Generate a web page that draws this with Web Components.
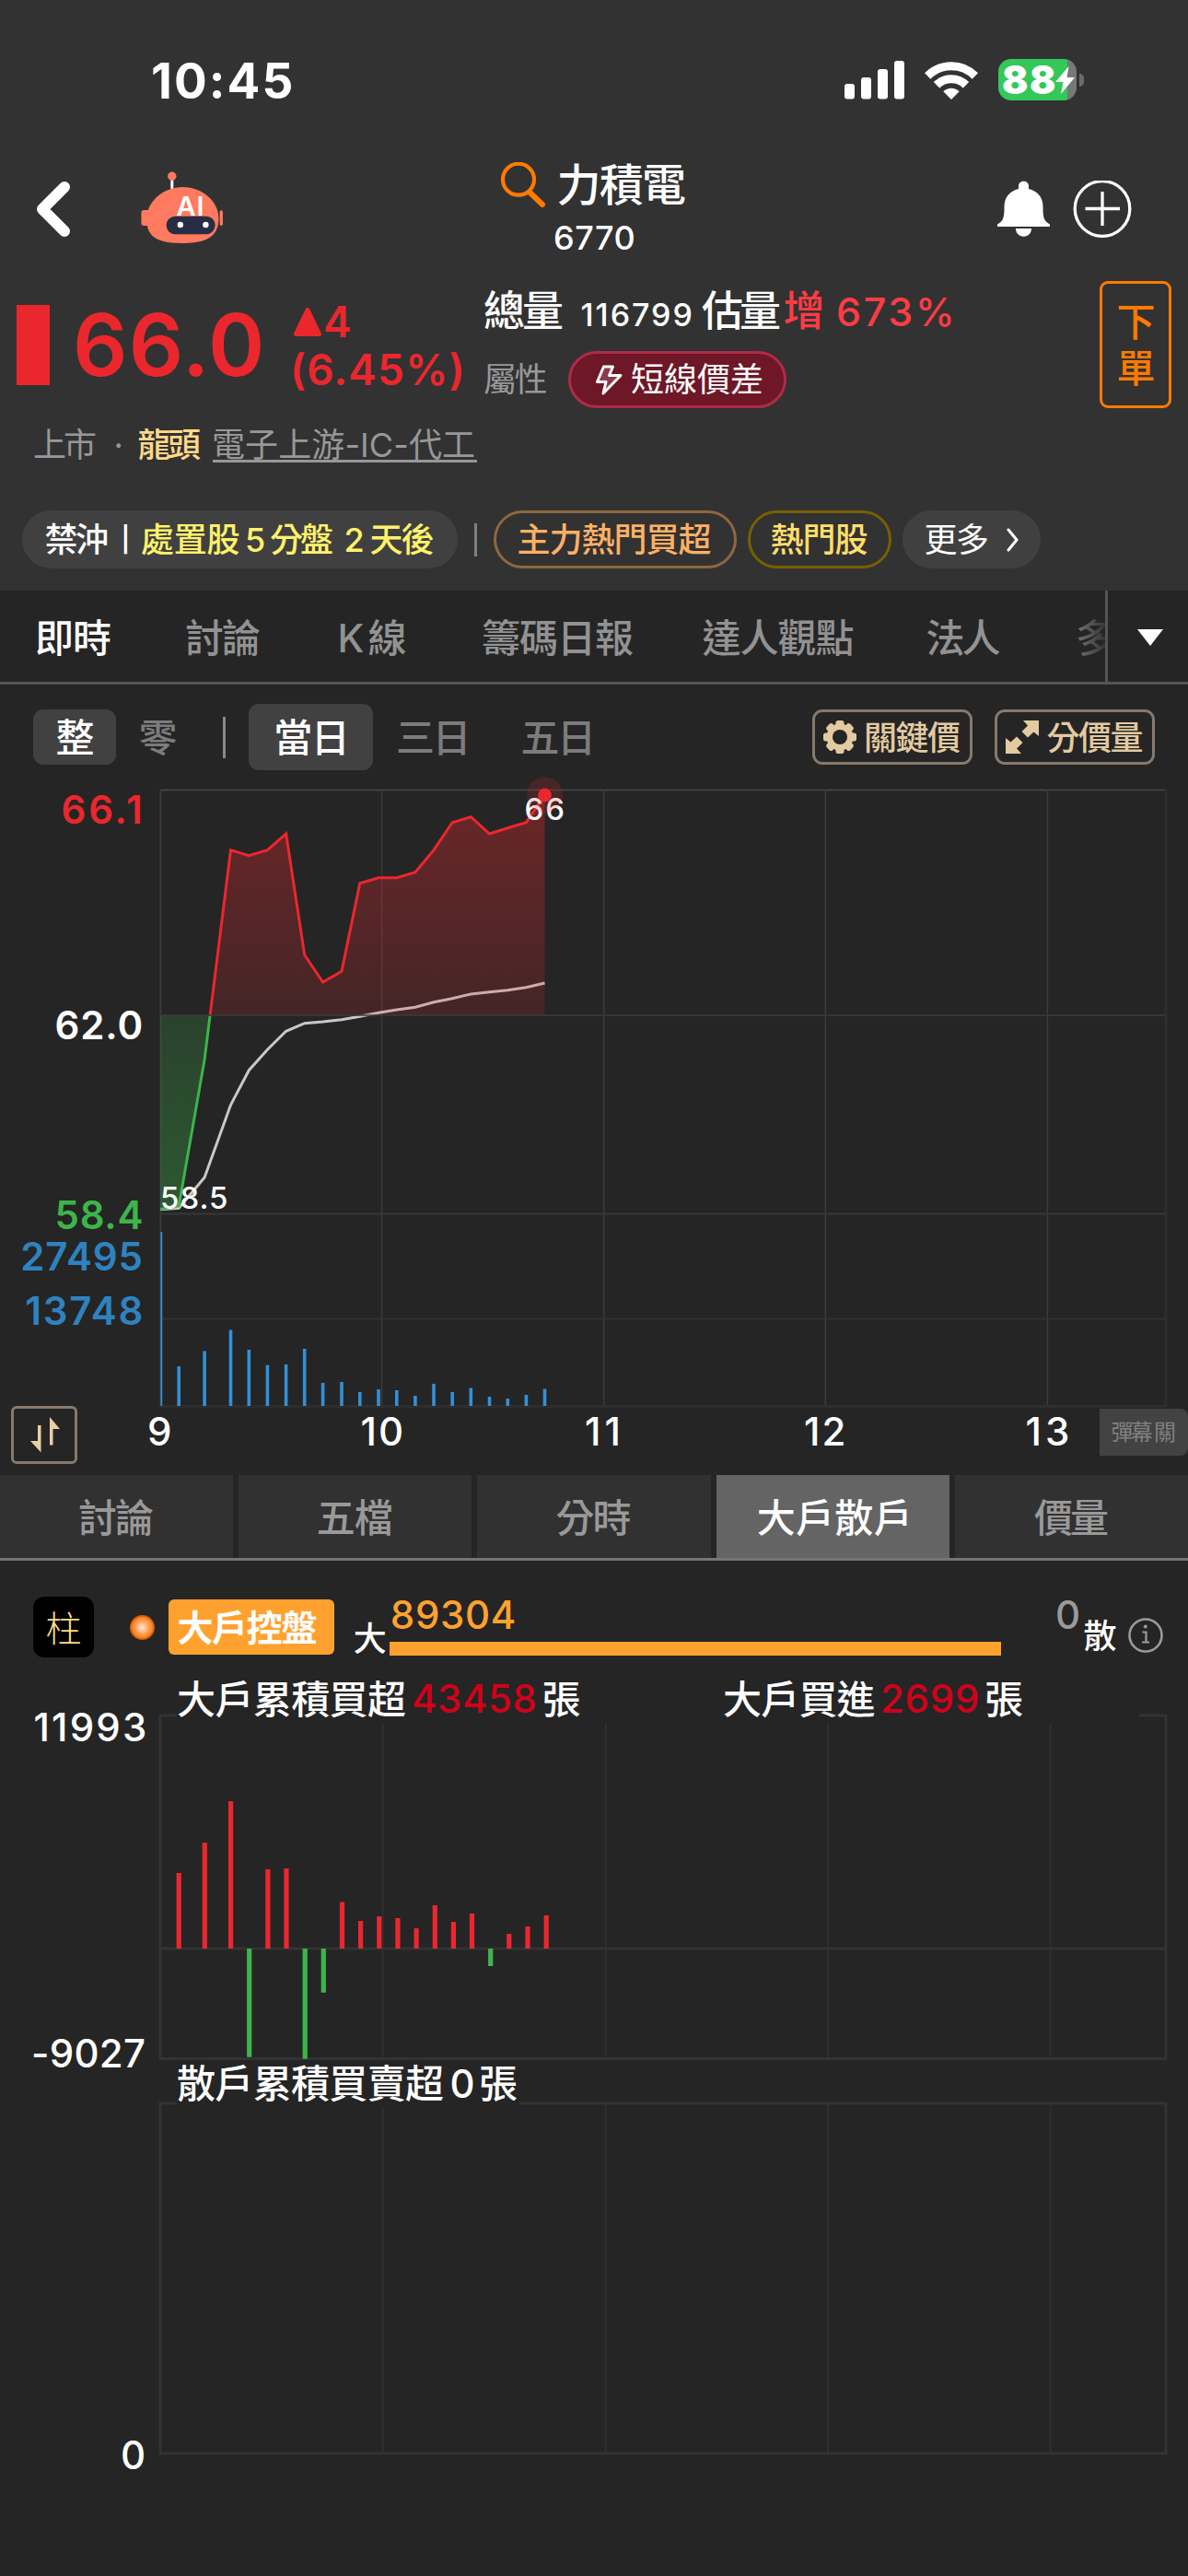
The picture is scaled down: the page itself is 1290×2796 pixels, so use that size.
<!DOCTYPE html>
<html lang="zh-Hant">
<head>
<meta charset="utf-8">
<title>力積電 6770</title>
<style>
    html, body {
        margin: 0;
        background: #252525;
    }
    body {
        width: 1290px;
        height: 2796px;
        overflow: hidden;
        font-family: Inter, "Noto Sans CJK TC", sans-serif;
        font-weight: 500;
        font-optical-sizing: none;
        font-variation-settings: "opsz" 14;
        color: #fff;
    }
</style>
</head>
<body>
<stock-app></stock-app>

<script>
const UP = '#eb272e';
const DOWN = '#3cb54a';
const FONT_FAMILY = 'Inter, "Noto Sans CJK TC", sans-serif';

const measureContext = document.createElement('canvas').getContext('2d');

function advanceOf(text, font) {
    const probe = document.createElement('span');
    probe.style.cssText = 'position:absolute;visibility:hidden;white-space:pre';
    probe.style.font = font;
    probe.style.fontOpticalSizing = 'none';
    probe.style.fontVariationSettings = '"opsz" 14';
    probe.textContent = text;
    document.body.append(probe);
    const width = probe.getBoundingClientRect().width;
    probe.remove();
    return width;
}

// Letter spacing and indent that make the ink of a text exactly `width` wide.
function fitInk(text, font, width) {
    measureContext.font = font;
    const box = measureContext.measureText(text);
    const bearings = box.width - box.actualBoundingBoxLeft - box.actualBoundingBoxRight;
    const ink = advanceOf(text, font) - bearings;
    const count = [...text].length;
    return {
        indent: box.actualBoundingBoxLeft,
        spacing: count > 1 ? (width - ink) / (count - 1) : 0
    };
}

class BaseElement extends HTMLElement {
    constructor() {
        super();
        this.attachShadow({mode: 'open'});
    }

    connectedCallback() {
        this.shadowRoot.innerHTML = `<style>* { box-sizing: border-box; } ${this.getStyle()}</style>${this.getTemplate()}`;
    }

    getStyle() {
        return '';
    }

    getTemplate() {
        return '<slot></slot>';
    }
}

class FitText extends BaseElement {
    connectedCallback() {
        super.connectedCallback();
        const width = parseFloat(this.getAttribute('width'));
        const style = getComputedStyle(this);
        const font = `${style.fontWeight} ${style.fontSize} ${style.fontFamily}`;
        const fit = fitInk(this.textContent, font, width);
        const nudge = /\p{Script=Han}/u.test(this.textContent) ? .5 : 0;
        this.style.width = `${width}px`;
        this.style.textIndent = `${fit.indent - nudge}px`;
        this.style.letterSpacing = `${fit.spacing}px`;
    }

    getStyle() {
        return `
            :host {
                display: inline-block;
                flex: none;
                text-align: left;
                white-space: pre;
            }
        `;
    }
}

class StatusBar extends BaseElement {
    getStyle() {
        return `
            :host {
                display: flex;
                align-items: flex-start;
                height: 150px;
                padding: 63px 113px 0 166px;
                justify-content: space-between;
            }
            .time {
                font-size: 53px;
                font-weight: 750;
                line-height: 51px;
            }
            .icons {
                display: flex;
                align-items: center;
                height: 47px;
            }
            .battery {
                display: flex;
                align-items: center;
                margin-left: 22px;
            }
            .cell {
                display: flex;
                align-items: center;
                width: 85px;
                height: 45px;
                padding-left: 5px;
                border-radius: 14px;
                background: linear-gradient(90deg, #34c759 75px, #787878 75px);
                font-size: 42px;
                font-weight: 900;
                line-height: 45px;
            }
            .cap {
                width: 5px;
                height: 14px;
                margin-left: 3px;
                border-radius: 0 5px 5px 0;
                background: #6c6c6c;
            }
        `;
    }

    getTemplate() {
        return `
            <fit-text class="time" width="150.500">10:45</fit-text>
            <div class="icons">
                <svg width="65" height="42" viewBox="0 0 65 42" fill="#fff">
                    <rect x="0" y="25" width="11" height="16.5" rx="3"/>
                    <rect x="18" y="18" width="11" height="23.5" rx="3"/>
                    <rect x="36" y="9" width="11" height="32.5" rx="3"/>
                    <rect x="54" y="0" width="11" height="41.5" rx="3"/>
                </svg>
                <svg width="58" height="42" viewBox="0 0 58 42" fill="none" stroke="#fff" stroke-width="9" style="margin-left:22.5px">
                    <path d="M3.2 16.5A36.5 36.5 0 0 1 54.8 16.5"/>
                    <path d="M13 26.300A22.600 22.600 0 0 1 45 26.300"/>
                    <path d="M29 42L20.300 33.200A12.400 12.400 0 0 1 37.700 33.200Z" fill="#fff" stroke="none"/>
                </svg>
                <div class="battery">
                    <div class="cell">
                        <fit-text width="57">88</fit-text>
                        <svg width="21" height="30" viewBox="0 0 21 30" fill="#fff"><path d="M14.500 0L0 17H8.500L6 30L21 12H12.500Z"/></svg>
                    </div>
                    <div class="cap"></div>
                </div>
            </div>
        `;
    }
}

class NavBar extends BaseElement {
    getStyle() {
        return `
            :host {
                display: grid;
                grid-template-columns: 400px 1fr 400px;
                height: 140px;
            }
            .left, .right {
                display: flex;
                align-items: flex-start;
            }
            .left {
                padding: 36px 0 0 40px;
            }
            .right {
                justify-content: flex-end;
                padding: 46px 60px 0 0;
            }
            .name {
                display: flex;
                margin-left: 143px;
                padding-top: 26px;
                font-size: 48px;
                line-height: 50px;
            }
            .code {
                display: block;
                margin: 14px 0 0 202px;
                font-size: 36px;
                line-height: 36px;
            }
            .robot text {
                font: 600 29px Inter, sans-serif;
            }
        `;
    }

    getTemplate() {
        return `
            <div class="left">
                <svg width="36" height="60" viewBox="0 0 36 60" fill="none" stroke="#fff" stroke-width="12" stroke-linecap="round" stroke-linejoin="round" style="margin-top:11px">
                    <path d="M30 6L6 30L30 54"/>
                </svg>
                <svg class="robot" width="90" height="79" viewBox="0 0 90 79" style="margin-left:77px">
                    <path d="M33.800 9V19" stroke="#fff" stroke-width="3"/>
                    <circle cx="33.800" cy="5.300" r="4.700" fill="#ff7a5e"/>
                    <rect x="0.400" y="42" width="12" height="17" rx="3" fill="#ff7a5e"/>
                    <rect x="85.600" y="42.300" width="3.300" height="16.500" rx="1.600" fill="#ff7a5e"/>
                    <path d="M45.500 17C66 17 84.400 32 84.400 51C84.400 68 75 78 45.500 78C16 78 6.200 70 6.200 52C6.200 32 25 17 45.500 17Z" fill="#ff7a5e"/>
                    <rect x="27.600" y="48.700" width="53" height="19.600" rx="9.800" fill="#262d45"/>
                    <circle cx="42.800" cy="58" r="3.200" fill="#fff"/>
                    <circle cx="70.400" cy="58" r="3.200" fill="#fff"/>
                    <text x="38.500" y="47.500" letter-spacing="1" fill="#fff">AI</text>
                </svg>
            </div>
            <div>
                <div class="name">
                    <svg width="50" height="50" viewBox="0 0 50 50" fill="none" stroke="#ff7a00">
                        <circle cx="20" cy="18.700" r="17" stroke-width="4.200"/>
                        <path d="M32.500 33L46 46" stroke-width="6" stroke-linecap="round"/>
                    </svg>
                    <fit-text width="137.5" style="margin-left:14px">力積電</fit-text>
                </div>
                <fit-text class="code" width="86.5">6770</fit-text>
            </div>
            <div class="right">
                <svg width="58" height="62" viewBox="0 0 58 62" fill="#fff">
                    <path d="M23 9V6C23 -1 34 -1 34 6V9C43 11 49.500 18 49.500 28C49.500 39 50 44 57 47.500V50H0V47.500C7 44 7.500 39 7.500 28C7.500 18 14 11 23 9Z"/>
                    <path d="M20 52H37C37 63.500 20 63.500 20 52Z"/>
                </svg>
                <svg width="65" height="64" viewBox="0 0 65 64" fill="none" stroke="#fff" stroke-width="3.300" style="margin-left:24px">
                    <circle cx="32" cy="30.500" r="29.800"/>
                    <path d="M13.500 30.500H51M32 12V49"/>
                </svg>
            </div>
        `;
    }
}

class QuoteHead extends BaseElement {
    getStyle() {
        return `
            :host {
                display: block;
                height: 264px;
            }
            .quote {
                display: flex;
                align-items: flex-start;
                height: 167px;
                color: ${UP};
                font-weight: 600;
            }
            .bar {
                width: 36px;
                height: 87px;
                margin: 41px 0 0 18px;
                background: ${UP};
            }
            .price {
                margin: 39px 0 0 29px;
                font-size: 93px;
                line-height: 90px;
            }
            .change {
                display: flex;
                flex-direction: column;
                gap: 2px;
                width: 182px;
                margin-left: 36px;
                padding-top: 34px;
                font-size: 46px;
                line-height: 50px;
            }
            .change div {
                display: flex;
                align-items: center;
            }
            .info {
                margin-left: 25.500px;
                padding-top: 23px;
                color: #fff;
                font-weight: 500;
            }
            .volume {
                display: flex;
                align-items: baseline;
                height: 50px;
                font-size: 45px;
                line-height: 50px;
            }
            .kind {
                display: flex;
                align-items: center;
                margin-top: 18px;
                font-size: 36px;
                font-weight: 400;
                line-height: 50px;
                color: #989898;
            }
            .pill {
                display: flex;
                align-items: center;
                width: 237px;
                height: 62px;
                margin-left: 22.500px;
                padding-left: 26px;
                border: 3px solid #b02a4a;
                border-radius: 31px;
                background: #6e1726;
                color: #fff;
            }
            .order {
                width: 78px;
                height: 138px;
                margin: 15px 18px 0 auto;
                padding: 17px 15.500px;
                border: 3px solid #ff7a00;
                border-radius: 9px;
                color: #ff7a00;
                font-size: 42px;
                font-weight: 500;
                line-height: 50px;
            }
            .sector {
                display: flex;
                padding: 1px 0 0 37.500px;
                color: #989898;
                font-size: 36px;
                font-weight: 400;
                line-height: 50px;
            }
            .sector b {
                font-weight: 500;
                color: #ffd98a;
            }
            .link {
                height: 44px;
                border-bottom: 3px solid #989898;
            }
        `;
    }

    getTemplate() {
        return `
            <div class="quote">
                <div class="bar"></div>
                <fit-text class="price" width="200">66.0</fit-text>
                <div class="change">
                    <div>
                        <svg width="30" height="31" viewBox="0 0 30 31"><path d="M15 2.500L27.500 28.500H2.500Z" fill="${UP}" stroke="${UP}" stroke-width="5" stroke-linejoin="round"/></svg>
                        <fit-text width="29" style="margin-left:4px">4</fit-text>
                    </div>
                    <fit-text width="181.500">(6.45%)</fit-text>
                </div>
                <div class="info">
                    <div class="volume">
                        <fit-text width="85">總量</fit-text>
                        <fit-text width="119" style="margin-left:20px;font-size:34px">116799</fit-text>
                        <fit-text width="85" style="margin-left:12px">估量</fit-text>
                        <fit-text width="40" style="margin-left:4.500px;color:#ff3b43">增</fit-text>
                        <fit-text width="123" style="margin-left:18px;font-size:43px;color:#ff3b43">673%</fit-text>
                    </div>
                    <div class="kind">
                        <fit-text width="67.5">屬性</fit-text>
                        <div class="pill">
                            <svg width="30" height="33" viewBox="0 0 30 33" fill="#8c3a4b" stroke="#fff" stroke-width="3" stroke-linejoin="round"><path d="M9.500 2H19.500L15.500 11.500H28L9 31L12 18.500H2.500Z"/></svg>
                            <fit-text width="141" style="margin-left:11px">短線價差</fit-text>
                        </div>
                    </div>
                </div>
                <div class="order">下<br>單</div>
            </div>
            <div class="sector">
                <fit-text width="67">上市</fit-text>
                <fit-text width="6" style="margin-left:21px">·</fit-text>
                <b style="margin-left:19.500px"><fit-text width="67.500">龍頭</fit-text></b>
                <div class="link" style="margin-left:12.500px;width:287px"><fit-text width="283" style="margin-left:1.500px">電子上游-IC-代工</fit-text></div>
            </div>
        `;
    }
}

class TagPill extends BaseElement {
    getStyle() {
        return `
            :host {
                display: flex;
                align-items: center;
                flex: none;
                height: 63px;
                border-radius: 32px;
                white-space: nowrap;
            }
            :host([filled]) {
                background: #404040;
            }
            :host([outlined]) {
                justify-content: center;
                border: 3px solid var(--tag-border);
            }
        `;
    }
}

class TagRow extends BaseElement {
    getStyle() {
        return `
            :host {
                display: flex;
                align-items: center;
                height: 63px;
                padding-left: 24px;
                font-size: 36px;
                line-height: 50px;
            }
            hr {
                width: 3px;
                height: 36px;
                margin: 0 18px;
                border: none;
                background: #808080;
            }
            .bar {
                margin-left: 18px;
                font-size: 27px;
                font-weight: 600;
            }
            .stop {
                display: flex;
                gap: 8px;
                margin-left: 17px;
                color: #fff26b;
            }
            .major { --tag-border: #8f6740; color: #ffb066; width: 264px; }
            .hot { --tag-border: #776000; color: #ffdf6b; width: 156px; margin-left: 12px; }
            .more { font-weight: 400; width: 150px; margin-left: 12px; padding-left: 25px; }
        `;
    }

    getTemplate() {
        return `
            <tag-pill filled style="width:473px;padding-left:26px">
                <fit-text width="66.500">禁沖</fit-text>
                <fit-text class="bar" width="3">|</fit-text>
                <span class="stop"><fit-text width="105.500">處置股</fit-text><fit-text width="18.500">5</fit-text><fit-text width="67">分盤</fit-text><fit-text width="19.500" style="margin-left:6px">2</fit-text><fit-text width="68">天後</fit-text></span>
            </tag-pill>
            <hr>
            <tag-pill outlined class="major"><fit-text width="210">主力熱門買超</fit-text></tag-pill>
            <tag-pill outlined class="hot"><fit-text width="104">熱門股</fit-text></tag-pill>
            <tag-pill filled class="more">
                <fit-text width="67.500">更多</fit-text>
                <svg width="14" height="26" viewBox="0 0 14 26" fill="none" stroke="#fff" stroke-width="3" stroke-linecap="round" stroke-linejoin="round" style="margin-left:20px"><path d="M2 2L11 13L2 24"/></svg>
            </tag-pill>
        `;
    }
}

class TabStrip extends BaseElement {
    getStyle() {
        return `
            :host {
                display: flex;
                height: 102px;
                border-bottom: 3px solid #555;
                color: #929292;
                font-size: 42px;
                line-height: 104px;
            }
            .scroll {
                display: flex;
                width: 1200px;
                overflow: hidden;
            }
            .scroll div {
                flex: none;
                text-align: center;
            }
            .active {
                color: #fff;
            }
            .scroll .faded {
                background: linear-gradient(90deg, #929292 25px, #252525 82px);
                -webkit-background-clip: text;
                background-clip: text;
                color: transparent;
            }
            .toggle {
                flex: 1;
                border-left: 3px solid #555;
                padding: 42px 0 0 32px;
                line-height: 0;
            }
        `;
    }

    getTemplate() {
        const tabs = [['即時', 161, 80], ['討論', 163, 80], ['K線', 163, 71], ['籌碼日報', 238, 163], ['達人觀點', 241, 163], ['法人', 161, 79]];
        return `
            <div class="scroll">
                ${tabs.map(([label, width, ink], i) => `<div class="${i === 0 ? 'active' : ''}" style="width:${width}px"><fit-text width="${ink}">${label}</fit-text></div>`).join('')}
                <div class="faded" style="width:124px">多</div>
            </div>
            <div class="toggle"><svg width="28" height="18" viewBox="0 0 28 18"><path d="M0 0H28L14 18Z" fill="#fff"/></svg></div>
        `;
    }
}

class ChartToolbar extends BaseElement {
    getStyle() {
        return `
            :host {
                display: flex;
                align-items: center;
                height: 114px;
                padding: 0 36px;
                font-size: 42px;
                line-height: 50px;
                color: #7c7c7c;
            }
            fit-text {
                padding-top: 1px;
            }
            .on {
                display: flex;
                align-items: center;
                justify-content: center;
                border-radius: 11px;
                background: #414141;
                color: #fff;
            }
            .tool {
                display: flex;
                align-items: center;
                width: 174px;
                height: 60px;
                padding-left: 9px;
                border: 3px solid #857a6c;
                border-radius: 11px;
                color: #e3caa1;
                font-size: 36px;
            }
            hr {
                width: 3px;
                height: 45px;
                margin: 0 25px 0 53px;
                border: none;
                background: #888;
            }
        `;
    }

    getTemplate() {
        return `
            <div class="on" style="width:90px;height:60px"><fit-text width="38">整</fit-text></div>
            <fit-text width="37" style="margin-left:26px">零</fit-text>
            <hr>
            <div class="on" style="width:135px;height:72px"><fit-text width="73.500">當日</fit-text></div>
            <fit-text width="73.500" style="margin-left:27.500px">三日</fit-text>
            <fit-text width="73.500" style="margin-left:62px">五日</fit-text>
            <div class="tool" style="margin-left:auto">
                <svg width="36" height="36" viewBox="-18 -18 36 36" fill="#e3caa1">
                    ${[0, 45, 90, 135].map(a => `<rect x="-4.500" y="-18" width="9" height="36" rx="2.500" transform="rotate(${a})"/>`).join('')}
                    <circle r="14.500"/>
                    <circle r="8" fill="#252525"/>
                </svg>
                <fit-text width="103" style="margin-left:10.500px">關鍵價</fit-text>
            </div>
            <div class="tool" style="margin-left:24px">
                <svg width="36" height="36" viewBox="0 0 36 36" fill="#e3caa1">
                    <path d="M19 0H36V17L30.500 12.500L24 18.500L17.500 12L24 5.500Z"/>
                    <path d="M17 36H0V19L5.500 23.500L12 17.500L18.500 24L12 30.500Z"/>
                </svg>
                <fit-text width="103" style="margin-left:10px">分價量</fit-text>
            </div>
        `;
    }
}

class ChartElement extends BaseElement {
    label(text, x, right, y, color = '#fff', size = 42, weight = 500) {
        const fit = fitInk(text, `${weight} ${size}px ${FONT_FAMILY}`, right - x);
        return `<text x="${x + fit.indent}" y="${y}" fill="${color}" font-size="${size}" font-weight="${weight}" letter-spacing="${fit.spacing}">${text}</text>`;
    }

    line(x1, y1, x2, y2, color, width = 1.5) {
        return `<path d="M${x1} ${y1}L${x2} ${y2}" stroke="${color}" stroke-width="${width}"/>`;
    }
}

class IntradayChart extends ChartElement {
    _x = [174.4, 194.2, 222.1, 250.5, 270.3, 290.4, 310.6, 330.7, 350.6, 371, 390.8, 411, 430.8, 450.9, 471, 491.2, 511.3, 531.5, 551.3, 571.4, 591.5];
    _price = [1312.5, 1309, 1150, 922.7, 928.7, 922.7, 905, 1036.5, 1066, 1054.3, 958.7, 952.7, 952.7, 946.7, 922.7, 892.7, 886.7, 905, 898.8, 892.7, 862.7];
    _average = [1312.7, 1311.3, 1278, 1199.3, 1161.7, 1139.3, 1119.3, 1110.7, 1109, 1106.7, 1103.3, 1099.3, 1096, 1093.3, 1087.7, 1083.7, 1079, 1076.7, 1074.7, 1071.7, 1067];
    _volume = [1337, 1483, 1466.5, 1443.5, 1465, 1481.7, 1481, 1464, 1501, 1500, 1511, 1508, 1509, 1515, 1502, 1511, 1506.5, 1516, 1518, 1514, 1507.5];

    getStyle() {
        return `
            :host {
                display: block;
                position: relative;
                height: 744px;
            }
            svg {
                display: block;
            }
            .sort, .danmu {
                position: absolute;
            }
            .sort {
                left: 12px;
                top: 669px;
                width: 72px;
                height: 63px;
                border: 3px solid #857a6c;
                border-radius: 6px;
            }
            .danmu {
                right: 0;
                top: 672px;
                width: 96px;
                height: 51px;
                padding-left: 14px;
                border-radius: 0 8px 8px 0;
                background: #424242;
                color: #808080;
                font-size: 24px;
                font-weight: 400;
                line-height: 51px;
            }
        `;
    }

    getTemplate() {
        const points = ys => this._x.map((x, i) => `${x} ${ys[i]}`).join('L');
        const bars = this._x.slice(1).map((x, i) => `<rect x="${x - 1.8}" y="${this._volume[i + 1]}" width="3.600" height="${1526 - this._volume[i + 1]}"/>`).join('');
        const area = `M174.400 1102L${points(this._price)}L591.500 1102Z`;
        return `
            <svg width="1290" height="744" viewBox="0 857 1290 744" overflow="visible">
                <defs>
                    <linearGradient id="up" gradientUnits="userSpaceOnUse" x1="0" y1="857" x2="0" y2="1102">
                        <stop offset="0" stop-color="${UP}" stop-opacity=".36"/>
                        <stop offset="1" stop-color="${UP}" stop-opacity=".16"/>
                    </linearGradient>
                    <linearGradient id="down" gradientUnits="userSpaceOnUse" x1="0" y1="1102" x2="0" y2="1317">
                        <stop offset="0" stop-color="${DOWN}" stop-opacity=".2"/>
                        <stop offset="1" stop-color="${DOWN}" stop-opacity=".36"/>
                    </linearGradient>
                    <clipPath id="above"><rect x="170" y="840" width="430" height="262"/></clipPath>
                    <clipPath id="below"><rect x="174" y="1102" width="430" height="216"/></clipPath>
                </defs>
                ${this.line(174, 857.5, 1265.5, 857.5, '#484848')}
                ${[414.6, 655.7, 896.3, 1137.4].map(x => this.line(x, 857, x, 1526, '#3b3b3b')).join('')}
                ${this.line(174.4, 857, 174.4, 1526, '#3b3b3b', 2)}
                ${this.line(1266, 857, 1266, 1527, '#2e2e2e', 3)}
                ${this.line(174, 1317.5, 1265.5, 1317.5, '#373737', 2)}
                ${this.line(174, 1431.5, 1265.5, 1431.5, '#343434')}
                ${this.line(174, 1526.5, 1267, 1526.5, '#2e2e2e', 3)}
                <path d="M${points(this._average)}" fill="none" stroke="#c8c8c8" stroke-width="3"/>
                <path d="${area}" fill="url(#up)" clip-path="url(#above)"/>
                <path d="${area}" fill="url(#down)" clip-path="url(#below)"/>
                <path d="M${points(this._price)}" fill="none" stroke="${UP}" stroke-width="3" clip-path="url(#above)"/>
                <path d="M${points(this._price)}" fill="none" stroke="${DOWN}" stroke-width="3" clip-path="url(#below)"/>
                ${this.line(174, 1102, 1265.5, 1102, '#3b3b3b')}
                <g fill="#3390d6"><rect x="174.400" y="1337" width="1.800" height="189"/>${bars}</g>
                ${this.label('66', 570.500, 611.200, 889.500, '#fff', 33)}
                <circle cx="591.500" cy="863" r="19.500" fill="${UP}" opacity=".18"/>
                <circle cx="591.500" cy="863" r="7.400" fill="${UP}"/>
                ${this.label('58.5', 176, 246, 1311.500, '#fff', 33)}
                ${this.label('66.1', 68.500, 152, 893.500, UP, 42, 600)}
                ${this.label('62.0', 61.500, 153.500, 1127.500, '#fff', 42, 600)}
                ${this.label('58.4', 61.500, 153.500, 1333.500, DOWN, 42, 600)}
                ${this.label('27495', 24.200, 153.500, 1378.500, '#2e83bf', 42, 600)}
                ${this.label('13748', 28.300, 153.500, 1437.500, '#2e83bf', 42, 600)}
                ${this.label('9', 162, 186, 1568.500)}
                ${this.label('10', 392.500, 436, 1568.500)}
                ${this.label('11', 636, 671.500, 1568.500)}
                ${this.label('12', 874, 916.500, 1568.500)}
                ${this.label('13', 1114.500, 1159, 1568.500)}
            </svg>
            <div class="sort">
                <svg width="66" height="57" viewBox="0 0 66 57" fill="#e8cfa5"><path d="M26 18H29.500V47.500L18 35H26ZM39 39.500V9L50 22H42.500V39.500Z"/></svg>
            </div>
            <div class="danmu"><fit-text width="68.500">彈幕 關</fit-text></div>
        `;
    }
}

class PanelTabs extends BaseElement {
    getStyle() {
        return `
            :host {
                display: grid;
                grid-template-columns: repeat(5, 1fr);
                gap: 6px;
                height: 93px;
                border-bottom: 3px solid #757575;
                font-size: 42px;
                line-height: 94px;
                text-align: center;
                color: #999;
            }
            div {
                height: 90px;
                overflow: hidden;
                background: #313131;
            }
            .active {
                background: #646464;
                color: #fff;
            }
        `;
    }

    getTemplate() {
        const tabs = [['討論', 80], ['五檔', 79], ['分時', 80], ['大戶散戶', 162], ['價量', 80]];
        return tabs.map(([label, ink]) => `<div class="${label === '大戶散戶' ? 'active' : ''}"><fit-text width="${ink}">${label}</fit-text></div>`).join('');
    }
}

class FlowSummary extends BaseElement {
    getStyle() {
        return `
            :host {
                display: flex;
                align-items: flex-start;
                height: 131px;
                padding: 39px 27px 0 36px;
                font-size: 36px;
                line-height: 40px;
            }
            .mode {
                width: 66px;
                height: 66px;
                border-radius: 12px;
                background: #000;
                color: #ffdf8f;
                font-size: 39px;
                font-weight: 300;
                line-height: 69px;
                text-align: center;
            }
            .lamp {
                width: 27px;
                height: 27px;
                margin: 20px 0 0 39px;
                border-radius: 50%;
                background: radial-gradient(circle, #ffe6d0 0, #ffb27a 28%, #ff7f1f 58%, #d85f0a 64%, #b34700 100%);
            }
            .badge {
                width: 180px;
                height: 60px;
                margin: 3px 0 0 15px;
                padding-left: 11px;
                border-radius: 6px;
                background: #ffa12f;
                font-size: 39px;
                font-weight: 700;
                line-height: 62px;
            }
            .meter {
                width: 664px;
                margin: 0 0 0 6px;
                color: #ffa12f;
                font-size: 42px;
            }
            .meter div {
                height: 15px;
                margin-top: 9px;
                background: #ffa12f;
            }
            .rest {
                color: #9a9a9a;
                font-size: 42px;
            }
        `;
    }

    getTemplate() {
        return `
            <div class="mode">柱</div>
            <div class="lamp"></div>
            <div class="badge"><fit-text width="150">大戶控盤</fit-text></div>
            <fit-text width="32" style="margin:26px 0 0 22.500px">大</fit-text>
            <div class="meter">
                <fit-text width="133" style="margin-left:2.500px;display:block">89304</fit-text>
                <div></div>
            </div>
            <fit-text class="rest" width="22.500" style="margin-left:61px">0</fit-text>
            <fit-text width="32" style="margin:23px 0 0 7.500px">散</fit-text>
            <svg width="38" height="38" viewBox="0 0 38 38" fill="none" stroke="#9a9a9a" style="margin:23px 0 0 15px">
                <circle cx="19" cy="19" r="17.500" stroke-width="2.600"/>
                <path d="M15.500 15.500H19.500V26M15 26.500H23" stroke-width="2.200"/>
                <circle cx="18.800" cy="9.500" r="2" fill="#9a9a9a" stroke="none"/>
            </svg>
        `;
    }
}

class FlowChart extends ChartElement {
    _x = [194.2, 222.3, 250.6, 270.7, 290.9, 311, 331.2, 351.3, 371.5, 391.6, 411.8, 431.9, 452.1, 472.3, 492.4, 512.5, 532.7, 552.8, 573, 593.2];
    _net = [2033, 2000, 1955, 2232.7, 2029, 2028, 2234.7, 2162.7, 2064.5, 2085, 2080, 2082, 2093, 2068, 2086, 2077, 2134, 2099, 2091, 2079];

    getStyle() {
        return `
            :host {
                display: block;
                height: 971px;
            }
            svg {
                display: block;
            }
        `;
    }

    frame(top, bottom) {
        return `
            ${[415.8, 657.7, 899, 1140.7].map(x => this.line(x, top, x, bottom, '#2f2f2f', 2)).join('')}
            <rect x="174" y="${top}" width="1092" height="${bottom - top}" fill="none" stroke="#333" stroke-width="3"/>
        `;
    }

    getTemplate() {
        const zero = 2115;
        const bars = this._x.map((x, i) => {
            const y = this._net[i];
            return `<rect x="${x - 2.6}" y="${Math.min(y, zero)}" width="5.200" height="${Math.abs(y - zero)}" fill="${y < zero ? UP : DOWN}"/>`;
        }).join('');
        return `
            <svg width="1290" height="971" viewBox="0 1825 1290 971" overflow="visible">
                ${this.frame(1862, 2234.5)}
                ${this.line(174, zero, 1266, zero, '#333', 3)}
                ${this.frame(2283, 2663)}
                ${bars}
                <rect x="192" y="1825" width="1045" height="45" fill="#252525"/>
                <rect x="192" y="2236" width="372" height="51" fill="#252525"/>
                ${this.label('11993', 37.500, 157, 1889.500)}
                ${this.label('-9027', 36, 157, 2243.500)}
                ${this.label('0', 133, 157, 2679.500)}
                ${this.label('大戶累積買超', 193, 440, 1859.500)}
                ${this.label('43458', 449, 581.500, 1859, '#d0021b')}
                ${this.label('張', 590.500, 628.600, 1859.500)}
                ${this.label('大戶買進', 786, 949.600, 1859.500)}
                ${this.label('2699', 958, 1062, 1859, '#d0021b')}
                ${this.label('張', 1071, 1110, 1859.500)}
                ${this.label('散戶累積買賣超', 193, 481, 2276.500)}
                ${this.label('0', 490.500, 513.500, 2276.500)}
                ${this.label('張', 522, 561, 2276.500)}
            </svg>
        `;
    }
}

class StockApp extends BaseElement {
    getStyle() {
        return `
            :host {
                display: flex;
                flex-direction: column;
            }
            header {
                height: 641px;
                background: #323232;
            }
        `;
    }

    getTemplate() {
        return `
            <header>
                <status-bar></status-bar>
                <nav-bar></nav-bar>
                <quote-head></quote-head>
                <tag-row></tag-row>
            </header>
            <tab-strip></tab-strip>
            <chart-toolbar></chart-toolbar>
            <intraday-chart></intraday-chart>
            <panel-tabs></panel-tabs>
            <flow-summary></flow-summary>
            <flow-chart></flow-chart>
        `;
    }
}

customElements.define('fit-text', FitText);
customElements.define('status-bar', StatusBar);
customElements.define('nav-bar', NavBar);
customElements.define('quote-head', QuoteHead);
customElements.define('tag-pill', TagPill);
customElements.define('tag-row', TagRow);
customElements.define('tab-strip', TabStrip);
customElements.define('chart-toolbar', ChartToolbar);
customElements.define('intraday-chart', IntradayChart);
customElements.define('panel-tabs', PanelTabs);
customElements.define('flow-summary', FlowSummary);
customElements.define('flow-chart', FlowChart);
customElements.define('stock-app', StockApp);
</script>
</body>
</html>
